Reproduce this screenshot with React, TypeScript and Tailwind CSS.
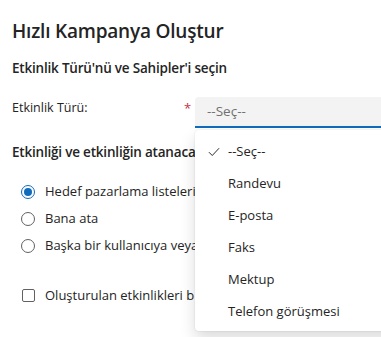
import React from 'react';

const options = ['--Seç--', 'Randevu', 'E-posta', 'Faks', 'Mektup', 'Telefon görüşmesi'];

const CheckIcon = () => (
  <svg width="14" height="14" viewBox="0 0 16 16" fill="none">
    <path d="M2.5 8.5l3.5 3.5 7.5-8" stroke="#242424" strokeWidth="1.1" strokeLinecap="round" strokeLinejoin="round" />
  </svg>
);

const Radio = ({ checked, label }: { checked?: boolean; label: string }) => (
  <div className="flex items-center h-[27px] pl-[9px]">
    <span
      className={`w-[14px] h-[14px] shrink-0 rounded-full border flex items-center justify-center ${
        checked ? 'border-[#0f6cbd]' : 'border-[#616161]'
      }`}
    >
      {checked && <span className="w-[8px] h-[8px] rounded-full bg-[#0f6cbd]" />}
    </span>
    <span className="ml-[10px] text-[13px] whitespace-nowrap">{label}</span>
  </div>
);

const App: React.FC = () => {
  return (
    <div
      className="w-[381px] h-[337px] overflow-hidden bg-white text-[#242424] relative"
      style={{ fontFamily: '"Open Sans", "Noto Sans", sans-serif' }}
    >
      <div className="px-3 pt-[17px]">
        <h1 className="text-[19px] leading-[28px] font-semibold whitespace-nowrap tracking-[-0.2px]">
          Hızlı Kampanya Oluştur
        </h1>
        <h2 className="mt-[13px] text-[13.5px] leading-[20px] font-semibold whitespace-nowrap tracking-[-0.2px]">
          Etkinlik Türü'nü ve Sahipler'i seçin
        </h2>

        <div className="mt-[19px] flex items-start">
          <label className="w-[172px] shrink-0 pt-[1px] text-[12.5px] leading-[20px] whitespace-nowrap">Etkinlik Türü:</label>
          <span className="w-[11px] shrink-0 pt-[2px] text-[13px] leading-[18px] text-[#c4314b]">*</span>
          <div className="relative w-[220px] shrink-0">
            <div className="h-[31px] bg-[#f3f3f3] border-b-2 border-[#0f6cbd] rounded-t-[4px] flex items-center pl-[12px] text-[13.5px] text-[#707070]">
              --Seç--
            </div>
            <div className="absolute left-0 top-[33px] w-[220px] bg-white rounded-[4px] shadow-[0_0_2px_rgba(0,0,0,0.12),0_8px_16px_rgba(0,0,0,0.14)] pt-[6px] pb-[3px] z-10">
              {options.map((o, i) => (
                <div key={o} className="h-[32px] flex items-center pl-[12px] text-[13px]">
                  <span className="w-[21px] flex items-center">{i === 0 && <CheckIcon />}</span>
                  <span className="whitespace-nowrap">{o}</span>
                </div>
              ))}
            </div>
          </div>
        </div>

        <h3 className="mt-[14px] text-[13.5px] leading-[20px] font-semibold whitespace-nowrap tracking-[-0.2px]">
          Etkinliği ve etkinliğin atanaca
        </h3>

        <div className="mt-[16px]">
          <Radio checked label="Hedef pazarlama listeleri" />
          <Radio label="Bana ata" />
          <Radio label="Başka bir kullanıcıya veya" />
        </div>

        <div className="mt-[23px] flex items-center h-[27px] pl-[10px]">
          <span className="w-[13px] h-[13px] shrink-0 rounded-[2px] border border-[#616161]" />
          <span className="ml-[10px] text-[13px] whitespace-nowrap">Oluşturulan etkinlikleri b</span>
        </div>
      </div>
    </div>
  );
};

export default App;
